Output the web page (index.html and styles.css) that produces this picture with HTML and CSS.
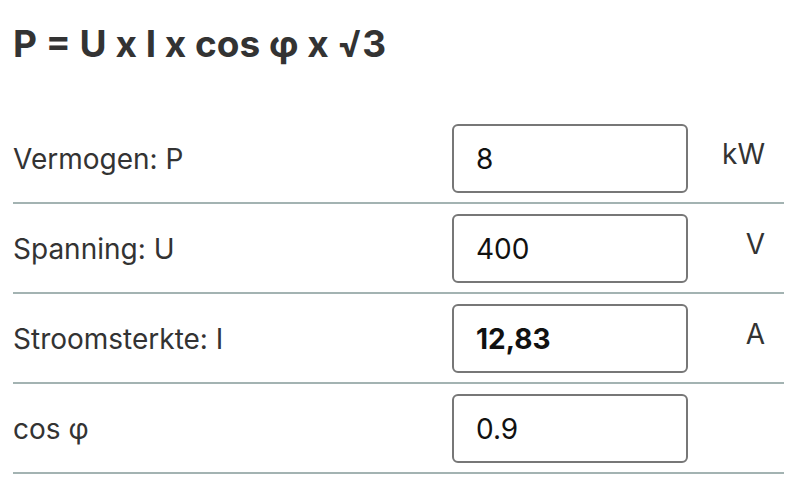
FILE: index.html
```html
<!DOCTYPE html>
<html lang="nl">
<head>
  <meta charset="UTF-8">
  <meta name="viewport" content="width=device-width, initial-scale=1.0">
  <title>Vermogen berekenen</title>
  <link rel="stylesheet" href="styles.css">
</head>
<body>

  <div class="calculator">
    <h1 class="formula">P = U x I x cos φ x √3</h1>

    <div class="row">
      <label for="power">Vermogen: P</label>
      <input type="text" id="power" value="8">
      <span class="unit">kW</span>
    </div>

    <div class="row">
      <label for="voltage">Spanning: U</label>
      <input type="text" id="voltage" value="400">
      <span class="unit">V</span>
    </div>

    <div class="row">
      <label for="current">Stroomsterkte: I</label>
      <input type="text" id="current" class="result" value="12,83">
      <span class="unit">A</span>
    </div>

    <div class="row">
      <label for="cosphi">cos φ</label>
      <input type="text" id="cosphi" value="0.9">
      <span class="unit"></span>
    </div>
  </div>

</body>
</html>
```

FILE: styles.css
```css
body {
  font-family: Inter, "Noto Sans", sans-serif;
  background-color: #fff;
  color: #333;
  margin: 0;
  padding: 0;
}

.calculator {
  width: 771px;
  margin-left: 13px;
}

.formula {
  margin: 0;
  height: 114px;
  padding-top: 21px;
  box-sizing: border-box;
  font-size: 37px;
  font-weight: 700;
  line-height: 46px;
  color: #333;
}

.row {
  display: grid;
  grid-template-columns: 1fr 236px 96px;
  align-items: center;
  padding: 10px 0 9px;
  border-bottom: 2px solid #a3b3b2;
}

label {
  font-size: 28px;
  color: #333;
}

input {
  height: 69px;
  width: 236px;
  box-sizing: border-box;
  padding: 0 22px;
  border: 2px solid #777;
  border-radius: 6px;
  font-family: Inter, "Noto Sans", sans-serif;
  font-size: 28px;
  color: #111;
  background-color: #fff;
}

input.result {
  font-weight: 700;
}

.unit {
  text-align: right;
  padding-right: 19px;
  font-size: 28px;
  color: #333;
  align-self: start;
  padding-top: 13px;
}
```
